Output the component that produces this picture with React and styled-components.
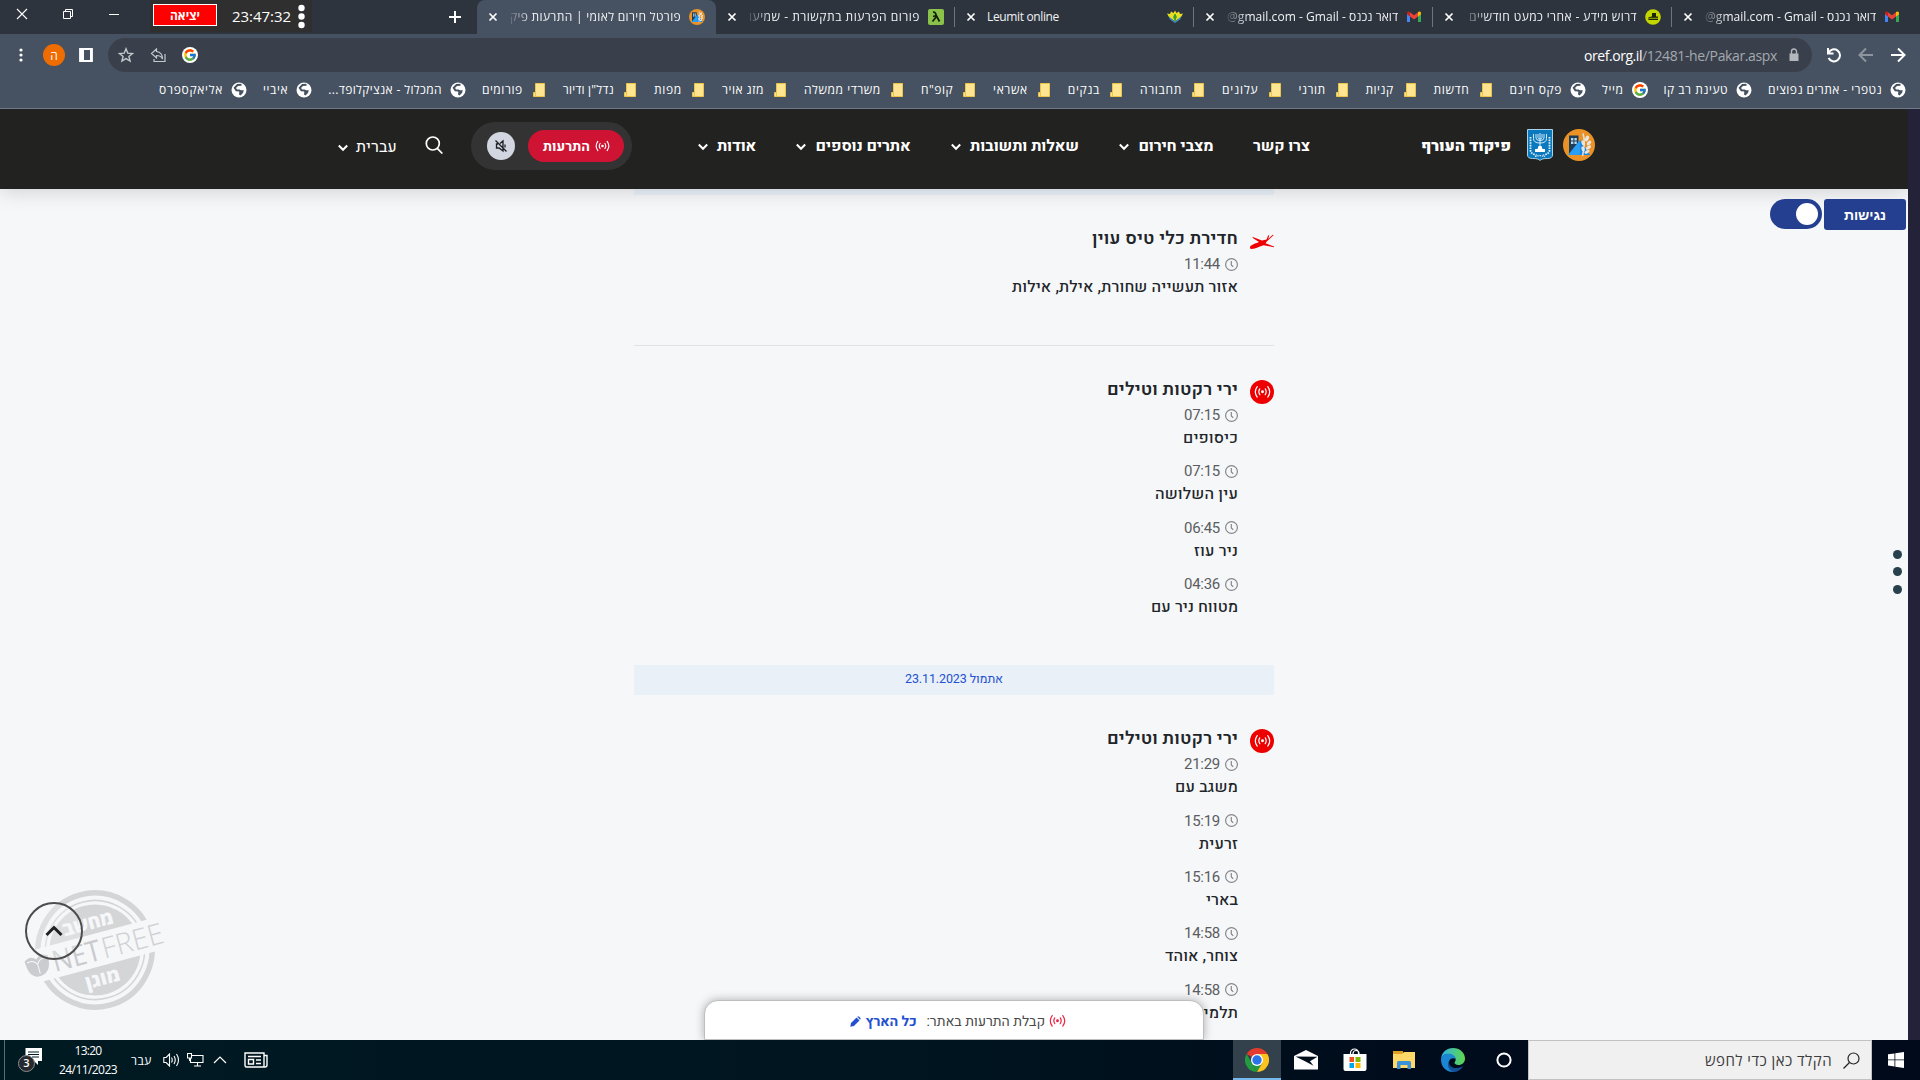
import React, { useLayoutEffect, useRef, useState } from "react";
import styled, { createGlobalStyle, ThemeProvider } from "styled-components";
import { FcGoogle } from "react-icons/fc";

const theme = {
  UI_FONT: '"Open Sans", "Noto Sans", sans-serif',
  SITE_FONT: 'Roboto, Heebo, "Open Sans", sans-serif',
  TAB_STRIP: "#2d343e",
  TOOLBAR: "#465261",
  OMNIBOX: "#3a404b",
  SITE_HEADER: "#222220",
  PAGE: "#f6f7f9",
  RED: "#cf1332",
  ALERT_RED: "#ee0000",
  BLUE: "#2450cf",
  ACCESS_BLUE: "#243f8f"
};

const GlobalStyle = createGlobalStyle`
  * {
    box-sizing: border-box;
  }
  body {
    margin: 0;
    overflow: hidden;
  }
  svg {
    display: block;
    flex: none;
  }
`;

const Screen = styled.div`
  width: 1920px;
  height: 1080px;
  display: flex;
  flex-direction: column;
  direction: rtl;
  overflow: hidden;
  font-family: ${p => p.theme.UI_FONT};
`;

const Line = styled.span`
  display: inline-block;
  flex: none;
  white-space: pre;
`;

/**
 *  @name Fit
 *  @desc Single line of text, tracked so that it takes exactly `w` pixels
 */
const Fit = ({ w, children, ...rest }) => {
  const ref = useRef(null);
  const [spacing, setSpacing] = useState(0);
  useLayoutEffect(() => {
    const natural = ref.current.getBoundingClientRect().width;
    setSpacing((w - natural) / children.length);
  }, []);
  return (
    <Line ref={ref} style={{ letterSpacing: `${spacing}px` }} {...rest}>
      {children}
    </Line>
  );
};

/* ---------- icons ---------- */

const Globe = () => (
  <svg width="16" height="16" viewBox="0 0 16 16">
    <circle cx="8" cy="8" r="7.5" fill="#fff" />
    <path
      d="M10.500 2.800 6.500 3 3.800 5.800l1.600 2.400 3 .2 1.600 1.600-1 3"
      fill="none"
      stroke="#465261"
      strokeWidth="2"
    />
    <path d="M8.500 8.200h4.300l-.8 2.800-2.800 2.500-.9-2z" fill="#465261" />
  </svg>
);

const Folder = () => (
  <svg width="16" height="16" viewBox="0 0 16 16">
    <path d="M4.500 1.500h9v13h-11v-4h2z" fill="#ffe491" stroke="#eac54a" />
    <path d="M4.500 11v3" stroke="#eac54a" />
  </svg>
);

const GoogleMark = styled.span`
  display: flex;
  align-items: center;
  justify-content: center;
  flex: none;
  width: 16px;
  height: 16px;
  border-radius: 50%;
  background: #fff;
`;

const Google = () => (
  <GoogleMark>
    <FcGoogle size={14} />
  </GoogleMark>
);

const GmailIcon = () => (
  <svg width="16" height="16" viewBox="0 0 16 16">
    <path d="M1 13V4l3 2.300V13z" fill="#4285f4" />
    <path d="M15 13V4l-3 2.300V13z" fill="#34a853" />
    <path d="M4 3.200 8 6.300l4-3.100v4.200l-4 3-4-3z" fill="#ea4335" />
    <path d="M1 4.500C1 2.500 3 2 4 3.200v4.200L1 5.200z" fill="#c5221f" />
    <path d="M15 4.500c0-2-2-2.500-3-1.300v4.200l3-2.200z" fill="#fbbc04" />
  </svg>
);

const HatIcon = () => (
  <svg width="16" height="16" viewBox="0 0 16 16">
    <circle cx="8" cy="8" r="7.800" fill="#c3d600" />
    <path d="M7 7.500V4h4v3.500h2V11H3.500V8.200z" fill="#1c2408" />
    <path d="M4 9.300h9" stroke="#c3d600" strokeWidth=".8" />
  </svg>
);

const LeumitIcon = () => (
  <svg width="16" height="16" viewBox="0 0 16 16">
    <path d="M0 4.500 3 5l1-2.500L6.500 4 8 1.500 9.500 4 12 2.500 13 5l3-.5-2.500 4.500L8 12 2.500 9z" fill="#e8e020" />
    <path d="M1.500 7 8 12.500 14.500 7 13 10.500 8 14l-5-3.500z" fill="#3f8fc4" />
    <path d="m8 5 1.300 3L8 11.500 6.700 8z" fill="#3e9b2e" stroke="#3e9b2e" />
  </svg>
);

const ForumIcon = () => (
  <svg width="16" height="16" viewBox="0 0 16 16">
    <rect width="16" height="16" rx="2" fill="#8bc34a" />
    <path d="M5 3.200q2.500-.5 3 2.800l3.500 6.500M8.500 6.500 5 7.500M8.500 7.500l-4 5" fill="none" stroke="#142008" strokeWidth="1.800" />
  </svg>
);

const OrefLogo = ({ size }) => (
  <svg width={size} height={size} viewBox="0 0 32 32">
    <circle cx="16" cy="16" r="16" fill="#ea9226" />
    <path d="M6 6.500h9.500v19H6z" fill="#1f3d57" />
    <path d="M8 9h2.400v2.600H8zM11.400 9h2.400v2.600h-2.400zM8 12.500h2.400V15H8zM11.400 12.500h2.400V15h-2.400z" fill="#b8d8ee" />
    <path d="M5 26 17 11l10 15z" fill="#2a9df4" />
    <path d="M17 11 27 26H17z" fill="#1c86dc" />
    <path d="M20 4.500c2 6 1.500 14-.5 22.500" fill="none" stroke="#e4e4e4" strokeWidth="1.500" />
    <g fill="#e9e6df">
      <ellipse cx="24" cy="9.500" rx="1.800" ry="3" transform="rotate(25 24 9.500)" />
      <ellipse cx="26" cy="14" rx="1.600" ry="2.800" transform="rotate(45 26 14)" />
      <ellipse cx="25.500" cy="18.500" rx="1.600" ry="3" transform="rotate(55 25.500 18.500)" />
      <ellipse cx="24" cy="22.800" rx="1.500" ry="2.800" transform="rotate(65 24 22.800)" />
      <ellipse cx="20" cy="14" rx="1.500" ry="2.500" transform="rotate(-20 20 14)" />
      <ellipse cx="20" cy="20" rx="1.500" ry="2.600" transform="rotate(-20 20 20)" />
    </g>
  </svg>
);

const Emblem = () => (
  <svg width="26" height="32" viewBox="0 0 26 32">
    <path d="M.5.500h25V26c0 2.500-2 3.500-5 3.500-4 0-6.500.5-7.500 2-1-1.500-3.500-2-7.500-2-3 0-5-1-5-3.500z" fill="#0b79bd" stroke="#a9d3ea" />
    <g fill="none" stroke="#e6f3fa">
      <path d="M6.500 5v4.500q0 4.500 6.500 4.500t6.500-4.500V5M9 5v4q0 2.500 4 2.500t4-2.500V5M11 5v3.500q0 1.500 2 1.500t2-1.500V5M13 4v15" strokeWidth=".9" />
      <path d="M3.500 8v13q0 4 6 5M22.500 8v13q0 4-6 5" strokeDasharray="1.600 1" strokeWidth="1.800" />
      <path d="M8 27.500q5-1.600 10 0" strokeWidth="1.200" strokeDasharray="1.500 .8" />
    </g>
    <path d="M11.500 17h3l1 3h2.500v3H8v-3h2.500z" fill="#fff" />
  </svg>
);

const Waves = ({ size, color, width = 1.5 }) => (
  <svg width={size} height={size * 0.8} viewBox="0 0 20 16" fill="none" stroke={color} strokeWidth={width} strokeLinecap="round">
    <circle cx="10" cy="8" r="1" fill={color} />
    <path d="M6.800 4.600q-2.300 3.400 0 6.800M13.200 4.600q2.300 3.400 0 6.800M3.800 1.800q-4.600 6.200 0 12.400M16.200 1.800q4.600 6.200 0 12.400" />
  </svg>
);

const Chevron = ({ size = 12 }) => (
  <svg width={size} height={size} viewBox="0 0 12 12">
    <path d="m1.800 4.500 4.200 4.300 4.200-4.300" fill="none" stroke="#fff" strokeWidth="2" />
  </svg>
);

const Clock = () => (
  <svg width="13" height="13" viewBox="0 0 13 13" fill="none" stroke="#85878a" strokeWidth="1.200">
    <circle cx="6.500" cy="6.500" r="5.900" />
    <path d="M6.300 3v4l1.900 1.700" />
  </svg>
);

const Drone = () => (
  <svg width="24" height="24" viewBox="0 0 24 24">
    <path
      d="M0 18.500C0 16 5 14.800 9 13L2.500 8.800l.4-.9 9 3.600 4.700-1 1.600-4.200 1 .3-1 3.400 4.600-4.300.8.6-6.600 5.900-1.500 2 8.500 3.300.2.800-10.700-2.100C9 17.500 5 20.500.200 19.800z"
      fill="#ee0000"
    />
  </svg>
);

/* ---------- browser chrome ---------- */

const TabStrip = styled.div`
  display: flex;
  flex: none;
  height: 34px;
  padding-right: 9px;
  background: ${p => p.theme.TAB_STRIP};
`;

const TabBox = styled.div`
  display: flex;
  align-items: center;
  width: 239px;
  height: 34px;
  padding: 0 11px 0 10px;
  color: #f1f3f5;
  font-size: 12px;
  line-height: 18px;
  border-radius: ${p => (p.$active ? "8px 8px 0 0" : "0")};
  background: ${p => (p.$active ? p.theme.TOOLBAR : "transparent")};
`;

const TabTitle = styled.div`
  display: flex;
  justify-content: flex-start;
  direction: ${p => (p.$ltr ? "ltr" : "rtl")};
  width: ${p => (p.$ltr ? "172px" : "171px")};
  margin-right: 8px;
  overflow: hidden;
  mask-image: ${p =>
    p.$ltr ? "none" : "linear-gradient(to right, transparent -4px, #000 22px)"};
`;

const TabDivider = styled.span`
  width: 1px;
  height: 20px;
  margin: 7px 0;
  margin-left: -1px;
  background: ${p => (p.$hidden ? "transparent" : "#6b747f")};
`;

const CloseIcon = styled.svg`
  margin-right: auto;
`;

const tabs = [
  { icon: <GmailIcon />, title: "דואר נכנס - \u200E@gmail.com - Gmail", w: 171 },
  { icon: <HatIcon />, title: "דרוש מידע - אחרי כמעט חודשיים", w: 168 },
  { icon: <GmailIcon />, title: "דואר נכנס - \u200E@gmail.com - Gmail", w: 171 },
  { icon: <LeumitIcon />, title: "Leumit online", w: 72, ltr: true },
  { icon: <ForumIcon />, title: "פורום הפרעות בתקשורת - שמיעו", w: 171, last: true },
  { icon: <OrefLogo size={16} />, title: "פורטל חירום לאומי | התרעות פיק", w: 171, active: true }
];

const Tab = ({ icon, title, w, ltr, active, last }) => (
  <>
    <TabBox $active={active}>
      {icon}
      <TabTitle $ltr={ltr}>
        <Fit w={w}>{title}</Fit>
      </TabTitle>
      <CloseIcon width="12" height="12" viewBox="0 0 12 12">
        <path d="m2.500 2.500 7 7m0-7-7 7" stroke="#fff" strokeWidth="1.700" />
      </CloseIcon>
    </TabBox>
    {!active && <TabDivider $hidden={last} />}
  </>
);

const NewTab = styled.div`
  display: flex;
  align-items: center;
  margin-right: 15px;
`;

const Timer = styled.div`
  display: flex;
  align-items: center;
  width: 162px;
  height: 32px;
  margin-right: 136px;
  padding: 0 7px 1px 3px;
  gap: 7px;
  background: #2f2f2f;
  color: #fff;
  font-size: 15px;
`;

const ExitButton = styled.div`
  display: flex;
  align-items: center;
  justify-content: center;
  width: 64px;
  height: 22px;
  margin: 0 auto 1px 0;
  border: 1px solid #fff;
  background: #f00;
  font-size: 12px;
  font-weight: 700;
`;

const WindowControls = styled.div`
  display: flex;
  gap: 34px;
  padding: 8px 30px 0 0;
`;

const Toolbar = styled.div`
  display: flex;
  flex: none;
  align-items: center;
  height: 42px;
  padding: 0 14px;
  background: ${p => p.theme.TOOLBAR};
`;

const NavIcons = styled.div`
  display: flex;
  gap: 16px;
`;

const Omnibox = styled.div`
  display: flex;
  align-items: center;
  width: 1704px;
  height: 34px;
  margin-right: 14px;
  padding: 0 10px;
  border-radius: 17px;
  background: ${p => p.theme.OMNIBOX};
  font-size: 14px;
`;

const Url = styled.div`
  direction: ltr;
  margin: 0 9px 0 auto;
  color: #a4a9b0;

  b {
    font-weight: 400;
    color: #fff;
  }
`;

const OmniIcons = styled.div`
  display: flex;
  align-items: center;
  gap: 16px;
`;

const SidePanelIcon = styled.svg`
  margin-right: 14px;
`;

const Avatar = styled.div`
  display: flex;
  align-items: center;
  justify-content: center;
  width: 22px;
  height: 22px;
  border-radius: 50%;
  margin: 0 13px 0 20px;
  background: #ef6c00;
  color: #fff;
  font-size: 12px;
`;

const Bookmarks = styled.div`
  display: flex;
  flex: none;
  gap: 16px;
  height: 33px;
  padding: 0 14px 4px;
  border-bottom: 1px solid #6f7b88;
  background: ${p => p.theme.TOOLBAR};
`;

const Bookmark = styled.div`
  display: flex;
  align-items: center;
  gap: 8px;
  color: #fff;
  font-size: 12px;
  line-height: 16px;
`;

const bookmarks = [
  ["globe", "נטפרי - אתרים נפוצים", 114],
  ["globe", "טעינת רב קו", 64.5],
  ["google", "מייל", 21.5],
  ["globe", "פקס חינם", 52.5],
  ["folder", "חדשות", 36],
  ["folder", "קניות", 28],
  ["folder", "תורני", 27],
  ["folder", "עלונים", 36.5],
  ["folder", "תחבורה", 42],
  ["folder", "בנקים", 32.2],
  ["folder", "אשראי", 34.7],
  ["folder", 'קופ"ח', 32.2],
  ["folder", "משרדי ממשלה", 77],
  ["folder", "מזג אויר", 42],
  ["folder", "מפות", 28],
  ["folder", 'נדל"ן ודיור', 51.2],
  ["folder", "פורומים", 40.8],
  ["globe", "המכלול - אנציקלופד...", 113.7],
  ["globe", "איביי", 25.2],
  ["globe", "אליאקספרס", 64]
];

const bookmarkIcons = { globe: <Globe />, google: <Google />, folder: <Folder /> };

const Browser = () => (
  <>
    <TabStrip>
      {tabs.map((t, i) => (
        <Tab key={i} {...t} />
      ))}
      <NewTab>
        <svg width="14" height="14" viewBox="0 0 14 14">
          <path d="M7 1v12M1 7h12" stroke="#fff" strokeWidth="2" />
        </svg>
      </NewTab>
      <Timer>
        <svg width="7" height="32" viewBox="0 0 7 32" fill="#fff">
          <circle cx="3.500" cy="8" r="3.200" />
          <circle cx="3.500" cy="16.500" r="3.200" />
          <circle cx="3.500" cy="25" r="3.200" />
        </svg>
        <Fit w={59} dir="ltr">23:47:32</Fit>
        <ExitButton>יציאה</ExitButton>
      </Timer>
      <WindowControls>
        <svg width="12" height="12" viewBox="0 0 12 12">
          <path d="M1 6.500h10" stroke="#fff" />
        </svg>
        <svg width="12" height="12" viewBox="0 0 12 12" fill="none" stroke="#fff">
          <path d="M1.500 3.500h7v7h-7zM3.500 3.500v-2h7v7h-2" />
        </svg>
        <svg width="12" height="12" viewBox="0 0 12 12">
          <path d="m1 1 10 10M11 1 1 11" stroke="#fff" strokeWidth="1.100" />
        </svg>
      </WindowControls>
    </TabStrip>
    <Toolbar>
      <NavIcons>
        <svg width="16" height="16" viewBox="0 0 16 16" fill="none" stroke="#fff" strokeWidth="2">
          <path d="M1 8h13M8 1.500 14.500 8 8 14.500" />
        </svg>
        <svg width="16" height="16" viewBox="0 0 16 16" fill="none" stroke="#8d959e" strokeWidth="2">
          <path d="M15 8H2M8 1.500 1.500 8 8 14.500" />
        </svg>
        <svg width="16" height="16" viewBox="0 0 16 16" fill="none" stroke="#fff" strokeWidth="2">
          <path d="M2 1v5.500h5.500M2.500 6A6 6 0 1 1 2.600 11" />
        </svg>
      </NavIcons>
      <Omnibox>
        <svg width="16" height="16" viewBox="0 0 16 16">
          <path d="M3.500 6.500h9V14h-9z" fill="#b3b7bc" />
          <path d="M5.500 7V4.500a2.500 2.500 0 0 1 5 0V7" fill="none" stroke="#b3b7bc" strokeWidth="1.400" />
        </svg>
        <Url>
          <b>
            <Fit w={58}>oref.org.il</Fit>
          </b>
          <Fit w={135}>/12481-he/Pakar.aspx</Fit>
        </Url>
        <OmniIcons>
          <Google />
          <svg width="16" height="16" viewBox="0 0 16 16" fill="none" stroke="#c4c8cc" strokeWidth="1.200">
            <path d="M6.500 2 1.500 6.500 6.500 11V8.500c3 0 5 1 6 3.500 0-4-2-7-6-7.500zM15 7v7.500H4V12" />
          </svg>
          <svg width="16" height="16" viewBox="0 0 16 16" fill="none" stroke="#c4c8cc" strokeWidth="1.400">
            <path d="m8 1.800 1.800 4.400 4.700.3-3.600 3 1.200 4.600L8 11.600l-4.100 2.500 1.200-4.600-3.600-3 4.700-.3z" />
          </svg>
        </OmniIcons>
      </Omnibox>
      <SidePanelIcon width="16" height="16" viewBox="0 0 16 16">
        <path d="M2 2h12v12H2z" fill="none" stroke="#fff" strokeWidth="1.800" />
        <path d="M2 2h4v12H2zM12 2h2v12h-2z" fill="#fff" />
      </SidePanelIcon>
      <Avatar>ה</Avatar>
      <svg width="4" height="16" viewBox="0 0 4 16" fill="#fff">
        <circle cx="2" cy="3" r="1.600" />
        <circle cx="2" cy="8" r="1.600" />
        <circle cx="2" cy="13" r="1.600" />
      </svg>
    </Toolbar>
    <Bookmarks>
      {bookmarks.map(([icon, label, w]) => (
        <Bookmark key={label}>
          {bookmarkIcons[icon]}
          <Fit w={w}>{label}</Fit>
        </Bookmark>
      ))}
    </Bookmarks>
  </>
);

/* ---------- site ---------- */

const Viewport = styled.div`
  display: flex;
  flex: none;
  height: 931px;
  overflow: hidden;
`;

const EdgeStrip = styled.div`
  width: 12px;
  background: #232239;
`;

const Page = styled.div`
  position: relative;
  width: 1908px;
  background: ${p => p.theme.PAGE};
  font-family: ${p => p.theme.SITE_FONT};
  overflow: hidden;
`;

const SiteHeader = styled.div`
  position: relative;
  z-index: 1;
  display: flex;
  align-items: center;
  height: 80px;
  padding: 0 313px 8px 0;
  background: ${p => p.theme.SITE_HEADER};
  box-shadow: 0 2px 20px rgba(0, 0, 0, 0.16);
  color: #fff;
`;

const Brand = styled.div`
  display: flex;
  align-items: center;
  gap: 10px;
  margin-left: 111px;
  font-size: 16px;
  font-weight: 900;

  span {
    margin: 2px 6px 0 0;
  }
`;

const Nav = styled.div`
  display: flex;
  gap: 39.500px;
  margin-left: 65px;
  padding-top: 2px;
`;

const NavItem = styled.div`
  display: flex;
  align-items: center;
  gap: ${p => (p.$light ? "7px" : "8px")};
  padding-top: ${p => (p.$light ? "3px" : "0")};
  font-size: 16px;
  font-weight: ${p => (p.$light ? 400 : 700)};
`;

const AlertsPill = styled.div`
  display: flex;
  align-items: center;
  justify-content: space-between;
  width: 161px;
  height: 48px;
  margin: 2px 0 0 28px;
  padding: 0 8px 0 16px;
  border-radius: 24px;
  background: #333334;
`;

const AlertsButton = styled.div`
  display: flex;
  align-items: center;
  gap: 5px;
  height: 32px;
  width: 96px;
  padding: 0 14px;
  border-radius: 16px;
  background: ${p => p.theme.RED};
  font-size: 14px;
  font-weight: 700;
`;

const Mute = styled.div`
  display: flex;
  align-items: center;
  justify-content: center;
  width: 28px;
  height: 28px;
  border-radius: 50%;
  background: #d1d6e0;
`;

const Search = styled.svg`
  margin: 0 0 0 28px;
`;

const navItems = [
  { label: "צרו קשר", w: 57, plain: true },
  { label: "מצבי חירום", w: 75 },
  { label: "שאלות ותשובות", w: 109 },
  { label: "אתרים נוספים", w: 95 },
  { label: "אודות", w: 39 }
];

const Header = () => (
  <SiteHeader>
    <Brand>
      <OrefLogo size={32} />
      <Emblem />
      <Fit w={90}>פיקוד העורף</Fit>
    </Brand>
    <Nav>
      {navItems.map(({ label, w, plain }) => (
        <NavItem key={label}>
          <Fit w={w}>{label}</Fit>
          {!plain && <Chevron />}
        </NavItem>
      ))}
    </Nav>
    <AlertsPill>
      <AlertsButton>
        <Waves size={15} color="#fff" />
        <Fit w={47}>התרעות</Fit>
      </AlertsButton>
      <Mute>
        <svg width="14" height="14" viewBox="0 0 14 14" fill="none" stroke="#1d1f24" strokeWidth="1.300">
          <path d="M6 4.500 9 2v10L5 9H2.500V5H4M1.500 1.500l11 11M11 5.500v3" />
        </svg>
      </Mute>
    </AlertsPill>
    <Search width="18" height="18" viewBox="0 0 18 18" fill="none" stroke="#fff" strokeWidth="1.700">
      <circle cx="7.800" cy="7.500" r="6.500" />
      <path d="m12.300 12.300 5 5.200" />
    </Search>
    <NavItem $light>
      <Fit w={41}>עברית</Fit>
      <Chevron />
    </NavItem>
  </SiteHeader>
);

const Feed = styled.div`
  width: 640px;
  margin-right: 634px;
`;

const TodayBar = styled.div`
  height: 6px;
  background: #eaf0f8;
`;

const DateBar = styled.div`
  display: flex;
  justify-content: center;
  height: 30px;
  padding-top: 4px;
  background: #eaf0f8;
  color: ${p => p.theme.BLUE};
  font-size: 12.500px;
  line-height: 20px;
`;

const Alert = styled.div`
  display: flex;
  gap: 12px;
  padding: 29px 0 47px;
  border-bottom: ${p => (p.$line ? "1px solid #e0e2e5" : "none")};
`;

const AlertIcon = styled.div`
  display: flex;
  align-items: center;
  justify-content: center;
  width: 24px;
  height: 24px;
  margin-top: 5px;
  border-radius: 50%;
  background: ${p => (p.$filled ? p.theme.ALERT_RED : "transparent")};
`;

const AlertTitle = styled.div`
  color: #212529;
  font-size: 18px;
  font-weight: 600;
  line-height: 28px;
`;

const Entry = styled.div`
  height: 56.400px;
`;

const Entries = styled.div`
  margin-bottom: -10.400px;
`;

const Time = styled.div`
  display: flex;
  align-items: center;
  gap: 5px;
  height: 24px;
  color: #5b5d60;
  font-size: 15px;
`;

const Place = styled.div`
  color: #212529;
  font-size: 16px;
  font-weight: 500;
  line-height: 22px;
`;

const days = [
  [
    {
      drone: true,
      title: "חדירת כלי טיס עוין",
      w: 146,
      line: true,
      entries: [["11:44", "אזור תעשייה שחורת, אילת, אילות", 226]]
    },
    {
      title: "ירי רקטות וטילים",
      w: 131,
      entries: [
        ["07:15", "כיסופים", 55],
        ["07:15", "עין השלושה", 83],
        ["06:45", "ניר עוז", 44],
        ["04:36", "מטווח ניר עם", 87]
      ]
    }
  ],
  [
    {
      title: "ירי רקטות וטילים",
      w: 131,
      entries: [
        ["21:29", "משגב עם", 63],
        ["15:19", "זרעית", 39],
        ["15:16", "בארי", 32],
        ["14:58", "צוחר, אוהד", 73],
        ["14:58", "תלמי אליהו", 78],
        ["14:58"]
      ]
    }
  ]
];

const AlertGroup = ({ drone, title, w, line, entries }) => (
  <Alert $line={line}>
    <AlertIcon $filled={!drone}>
      {drone ? <Drone /> : <Waves size={17} color="#fff" width={1.4} />}
    </AlertIcon>
    <div>
      <AlertTitle>
        <Fit w={w}>{title}</Fit>
      </AlertTitle>
      <Entries>
        {entries.map(([time, place, width], i) => (
          <Entry key={i}>
            <Time>
              <Clock />
              <Fit w={36}>{time}</Fit>
            </Time>
            {place && (
              <Place>
                <Fit w={width}>{place}</Fit>
              </Place>
            )}
          </Entry>
        ))}
      </Entries>
    </div>
  </Alert>
);

const Access = styled.div`
  position: absolute;
  z-index: 2;
  top: 90px;
  right: 2px;
  display: flex;
  gap: 2px;
`;

const AccessButton = styled.div`
  display: flex;
  align-items: center;
  justify-content: center;
  width: 82px;
  height: 31px;
  border-radius: 3px;
  background: ${p => p.theme.ACCESS_BLUE};
  color: #fff;
  font: 700 14px "Liberation Sans", sans-serif;
`;

const Toggle = styled.div`
  display: flex;
  align-items: center;
  width: 52px;
  height: 30px;
  padding-right: 4px;
  border-radius: 15px;
  background: ${p => p.theme.ACCESS_BLUE};

  &::after {
    content: "";
    width: 22px;
    height: 22px;
    border-radius: 50%;
    background: #fff;
  }
`;

const Dots = styled.div`
  position: absolute;
  top: 441px;
  right: 6px;
  display: grid;
  gap: 8.300px;

  span {
    width: 9px;
    height: 9px;
    border-radius: 50%;
    background: #27414d;
  }
`;

const AreaPanel = styled.div`
  position: absolute;
  z-index: 2;
  left: 704px;
  bottom: 0;
  display: flex;
  align-items: center;
  justify-content: center;
  width: 500px;
  height: 40px;
  padding: 2px 0 0 7px;
  border: 1px solid #bcbec0;
  border-radius: 14px 14px 0 0;
  background: #fff;
  box-shadow: 0 0 10px rgba(0, 0, 0, 0.3);
  color: #4a4a4a;
  font-size: 14px;
`;

const Area = styled.div`
  display: flex;
  align-items: center;
  gap: 5px;
  margin-right: 10px;
  color: ${p => p.theme.BLUE};
  font-weight: 700;
`;

const Stamp = styled.svg`
  position: absolute;
  left: 20px;
  top: 776px;
  direction: ltr;
`;

const ScrollTop = styled.div`
  position: absolute;
  left: 25px;
  top: 793px;
  display: flex;
  align-items: center;
  justify-content: center;
  width: 58px;
  height: 58px;
  border: 2px solid #4d4d4d;
  border-radius: 50%;
  background: rgba(246, 247, 249, 0.3);
`;

const NetFreeStamp = () => (
  <Stamp width="150" height="130" viewBox="0 0 150 130">
    <g transform="rotate(-15 75 65)">
      <g fill="none" stroke="#d4d5d7">
        <circle cx="75" cy="65" r="57" strokeWidth="5.500" />
        <circle cx="75" cy="65" r="49.500" strokeWidth="1.500" />
      </g>
      <circle cx="75" cy="65" r="45.500" fill="#d4d5d7" />
      <path d="M4 49h144v33H4z" fill="#f6f7f9" />
      <g fill="#f6f7f9" fontFamily="Open Sans" fontWeight="800" fontSize="19" textAnchor="middle">
        <text x="75" y="44" textLength="52" lengthAdjust="spacingAndGlyphs">מחשב</text>
        <text x="75" y="101" textLength="35" lengthAdjust="spacingAndGlyphs">מוגן</text>
      </g>
      <g fontFamily="Open Sans" fontSize="29">
        <text x="31" y="76" textLength="49" lengthAdjust="spacingAndGlyphs" fill="#c9cacd" fontWeight="400">NET</text>
        <text x="82" y="76" textLength="63" lengthAdjust="spacingAndGlyphs" fill="#d0d1d4" fontWeight="300">FREE</text>
      </g>
      <g transform="translate(-2 -4)">
        <path d="M6 62q7-5 12 1 5-6 12-1 0 17-12 18T6 62z" fill="#cbccd0" />
        <path d="M8 64q7-2 10 4 3-6 10-4M18 68v10" fill="none" stroke="#f6f7f9" />
      </g>
    </g>
  </Stamp>
);

const Site = () => (
  <Viewport>
    <EdgeStrip />
    <Page>
      <Header />
      <Feed>
        <TodayBar />
        {days[0].map((a, i) => (
          <AlertGroup key={i} {...a} />
        ))}
        <DateBar>
          <Fit w={98}>אתמול 23.11.2023</Fit>
        </DateBar>
        {days[1].map((a, i) => (
          <AlertGroup key={i} {...a} />
        ))}
      </Feed>
      <Access>
        <AccessButton>
          <Fit w={42}>נגישות</Fit>
        </AccessButton>
        <Toggle />
      </Access>
      <Dots>
        <span />
        <span />
        <span />
      </Dots>
      <NetFreeStamp />
      <ScrollTop>
        <svg width="18" height="12" viewBox="0 0 18 12">
          <path d="m1.500 10 7.500-7.500 7.500 7.500" fill="none" stroke="#222" strokeWidth="3" />
        </svg>
      </ScrollTop>
      <AreaPanel>
        <Waves size={17} color="#ee2244" width={1.4} />
        <Fit w={122}>{" קבלת התרעות באתר:"}</Fit>
        <Area>
          <Fit w={51}>כל הארץ</Fit>
          <svg width="11" height="11" viewBox="0 0 11 11" fill="#2450cf">
            <path d="m.3 10.700.7-3.600L6.600 1.500l2.900 2.900L3.900 10zM7.300.800Q8-.2 9.200.8l1 1q.9 1-.1 1.900z" />
          </svg>
        </Area>
      </AreaPanel>
    </Page>
  </Viewport>
);

/* ---------- windows taskbar ---------- */

const Taskbar = styled.div`
  display: flex;
  flex: none;
  align-items: center;
  height: 40px;
  background: linear-gradient(to right, #001a22, #00141f 50%, #000b1b 75%, #000a1a);
  color: #fff;
  font-size: 12px;
`;

const TaskCell = styled.div`
  display: flex;
  align-items: center;
  justify-content: center;
  width: ${p => p.$w || 49}px;
  height: 40px;
  padding-top: ${p => (p.$active ? "2px" : "0")};
  border-bottom: ${p => (p.$active ? "2px solid #76b9ed" : "none")};
  background: ${p => (p.$active ? "#33414c" : "transparent")};
`;

const SearchBox = styled.div`
  display: flex;
  align-items: center;
  gap: 11px;
  width: 344px;
  height: 40px;
  padding-right: 11px;
  border: 1px solid #c2c2c2;
  background: #f0f0f0;
  color: #3d3d3d;
  font-size: 15px;
`;

const Tray = styled.div`
  display: flex;
  align-items: center;
  margin-right: auto;
`;

const TrayIcon = styled.svg`
  margin-right: ${p => p.$before || 0}px;
  margin-left: ${p => p.$after || 0}px;
`;

const ClockBlock = styled.div`
  display: grid;
  justify-items: center;
  margin: 0 14px 0 17px;
  line-height: 19px;
`;

const Notify = styled.div`
  position: relative;
  width: 25px;
  height: 24px;
  margin-left: 12px;
`;

const Badge = styled.span`
  position: absolute;
  left: 1px;
  top: 7px;
  width: 17px;
  height: 17px;
  border: 1px solid #8b8d90;
  border-radius: 50%;
  background: #26292d;
  font-size: 11px;
  font-weight: 600;
  line-height: 14px;
  text-align: center;
`;

const ShowDesktop = styled.div`
  width: 5px;
  height: 40px;
  border-right: 1px solid #5d6c73;
`;

const ChromeIcon = () => (
  <svg width="24" height="24" viewBox="0 0 24 24">
    <path d="M12 12 1.600 6A12 12 0 0 1 22.400 6z" fill="#e33b2e" />
    <path d="m6.800 15 5.200 9A12 12 0 0 1 1.600 6z" fill="#249a41" />
    <path d="M12 24 17.200 15 6.800 15z" fill="#249a41" />
    <path d="m17.200 15-5.200 9A12 12 0 0 0 22.400 6H12z" fill="#fcc31e" />
    <circle cx="12" cy="12" r="6" fill="#fff" />
    <circle cx="12" cy="12" r="4.700" fill="#2b74e8" />
  </svg>
);

const EdgeIcon = () => (
  <svg width="24" height="24" viewBox="0 0 24 24">
    <defs>
      <linearGradient id="edgeTop" x1="0" x2="1">
        <stop offset="0" stopColor="#2fb0e6" />
        <stop offset="1" stopColor="#5fd84a" />
      </linearGradient>
    </defs>
    <path d="M0 12C0 4 6 0 12 0c7 0 12 5 12 10.500 0 4-3 6.500-6.500 6.500-3 0-4-1.500-4-2.200 0-.8 1.200-1.300 1.200-3.300C14.700 8.500 11 6 7 6 3 6 0 9 0 12z" fill="url(#edgeTop)" />
    <path d="M0 12c0-4 3.500-6.200 7.200-6.200 4.300 0 7.500 2.700 7.500 5.700-1-2-5.700-2-6.700 2C6.800 18.500 11 23 15 23.700 6 25.500 0 19 0 12z" fill="#1b86d2" />
    <path d="M8.300 12.500C6.500 19 14 22.500 22.300 18 20 22 16 24 13 24 8 23 5 17 8.300 12.500z" fill="#124f96" />
  </svg>
);

const BottomBar = () => (
  <Taskbar>
    <TaskCell $w={48}>
      <svg width="16" height="16" viewBox="0 0 16 16" fill="#fff">
        <path d="M0 2.300 6.500 1.400v6.100H0zM7.300 1.300 16 0v7.500H7.300zM0 8.300h6.500v6.200L0 13.600zM7.300 8.300H16V16l-8.700-1.300z" />
      </svg>
    </TaskCell>
    <SearchBox>
      <svg width="17" height="17" viewBox="0 0 17 17" fill="none" stroke="#222" strokeWidth="1.200">
        <circle cx="10.500" cy="6.500" r="5.500" />
        <path d="m6.500 10.500-6 6" />
      </svg>
      <Fit w={127}>הקלד כאן כדי לחפש</Fit>
    </SearchBox>
    <TaskCell>
      <svg width="16" height="16" viewBox="0 0 16 16">
        <circle cx="8" cy="8" r="6.600" fill="none" stroke="#fff" strokeWidth="2" />
      </svg>
    </TaskCell>
    <TaskCell $w={52}>
      <EdgeIcon />
    </TaskCell>
    <TaskCell $w={47}>
      <svg width="22" height="20" viewBox="0 0 22 20">
        <path d="M0 1h10v3H0z" fill="#e0a020" />
        <path d="M0 4h9l2-2h11v16H0z" fill="#ffd868" />
        <path d="M4 19v-6.500q0-1.500 1.500-1.500h11q1.500 0 1.500 1.500V19h-3.500v-4h-7v4z" fill="#3a92d8" />
      </svg>
    </TaskCell>
    <TaskCell $w={50}>
      <svg width="24" height="24" viewBox="0 0 24 24">
        <path d="M7.500 7V5a4 4 0 0 1 8 0v2M10 7V5.500a3 3 0 0 1 6 0V7" fill="none" stroke="#fff" strokeWidth="1.200" />
        <path d="M.5 6h23v15q0 2-2 2h-19q-2 0-2-2z" fill="#fff" />
        <path d="M6.500 9H11v5H6.500z" fill="#f25022" />
        <path d="M12.500 9H17.500v5h-5z" fill="#7fba00" />
        <path d="M6.500 15H11v5H6.500z" fill="#00a4ef" />
        <path d="M12.500 15H17.500v5h-5z" fill="#ffb900" />
      </svg>
    </TaskCell>
    <TaskCell $w={49}>
      <svg width="24" height="20" viewBox="0 0 24 20">
        <path d="M0 6 12 0l12 6v13.500H0z" fill="#fff" />
        <path d="m1.500 6.500 22 .3-7.500 4.500 3.500 4.500-8-4.300z" fill="#000f1c" />
      </svg>
    </TaskCell>
    <TaskCell $w={48} $active>
      <ChromeIcon />
    </TaskCell>
    <Tray>
      <TrayIcon width="24" height="16" viewBox="0 0 24 16" fill="none" stroke="#fff" strokeWidth="1.400">
        <path d="M1 1h19v14H2.500Q1 15 1 13zM20 3.500h3V13q0 2-2 2h-2M4 4.500h13M12 8h5M12 11.500h5" />
        <path d="M4.500 7.500h5v4.500h-5z" />
      </TrayIcon>
      <TrayIcon $before={17} $after={9} width="14" height="8" viewBox="0 0 14 8">
        <path d="m1 7 6-6 6 6" fill="none" stroke="#fff" strokeWidth="1.200" />
      </TrayIcon>
      <TrayIcon width="17" height="14" viewBox="0 0 17 14" fill="none" stroke="#fff" strokeWidth="1.100">
        <path d="M5 2.500h11v7H3.500V5M7 13h7M10.500 9.500V13M.5.500h4V5h-4zM2.500 5v3" />
      </TrayIcon>
      <TrayIcon $before={7} $after={11} width="17" height="14" viewBox="0 0 17 14" fill="none" stroke="#fff" strokeWidth="1.100">
        <path d="M.8 4.500h2.400L6.500 1v12L3.200 9.500H.8zM8.500 4.500q1.500 2.500 0 5M11 3q2.500 4 0 8M13.500 1q4 6 0 12" />
      </TrayIcon>
      <Fit w={21}>עבר</Fit>
      <ClockBlock>
        <Fit w={27}>13:20</Fit>
        <Fit w={58}>24/11/2023</Fit>
      </ClockBlock>
      <Notify>
        <svg width="25" height="24" viewBox="0 0 25 24">
          <path d="M8.500 0H25v13h-4v4l-4-4H8.500z" fill="#fff" />
          <path d="M11 4h11M11 6.500h11M15 9h7" stroke="#001a22" />
        </svg>
        <Badge>3</Badge>
      </Notify>
      <ShowDesktop />
    </Tray>
  </Taskbar>
);

export default function App() {
  return (
    <ThemeProvider theme={theme}>
      <GlobalStyle />
      <Screen>
        <Browser />
        <Site />
        <BottomBar />
      </Screen>
    </ThemeProvider>
  );
}
